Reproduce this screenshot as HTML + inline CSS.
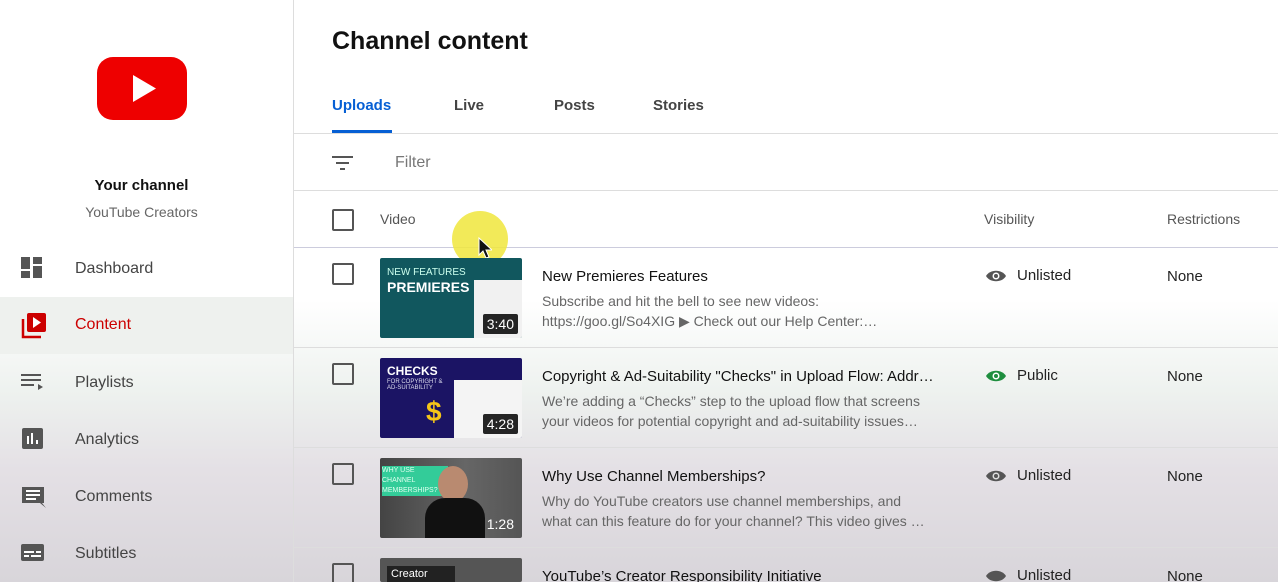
<!DOCTYPE html><html style="overflow:hidden;height:582px"><head><style>
body{margin:0;width:1278px;height:582px;overflow:hidden;font-family:"Liberation Sans",sans-serif;background:linear-gradient(#fff 0,#fff 300px,#eef2ef 390px,#e4e0e5 470px,#d8d5da 582px);position:relative;color:#0d0d0d}
.a{position:absolute}
.side{left:0;top:0;width:293px;height:582px;border-right:1px solid #ddd}
.nav{left:0;width:293px;height:57px}
.nav span{position:absolute;left:75px;top:19px;font-size:16px;color:#444}
.nav svg{position:absolute;left:21px;top:16px}
.hl{border-bottom:1px solid #ddd}
.cb{width:18px;height:18px;border:2px solid #555;border-radius:2px;position:absolute;left:332px}
.th{position:absolute;width:142px;height:80px;border-radius:2px;overflow:hidden}
.dur{position:absolute;right:4px;bottom:4px;background:rgba(0,0,0,.85);color:#fff;font-size:14px;padding:2px 4px;border-radius:2px}
.t{position:absolute;left:542px;font-size:15px;color:#111}
.d{position:absolute;left:542px;font-size:14px;color:#666;line-height:20px;width:392px}
.vis{position:absolute;left:985px;font-size:15px;color:#222}
.vis svg{vertical-align:-4px;margin-right:10px}
.rs{position:absolute;left:1167px;font-size:15px;color:#222}
</style></head><body>
<div class="a side"></div>
<svg class="a" style="left:97px;top:57px" width="90" height="63" viewBox="0 0 90 63"><rect width="90" height="63" rx="16" fill="#e00"/><path d="M36 18v27l23-13.5z" fill="#fff"/></svg>
<div class="a" style="left:0;width:283px;top:177px;text-align:center;font-size:15px;font-weight:bold;color:#111">Your channel</div>
<div class="a" style="left:0;width:283px;top:204px;text-align:center;font-size:14px;color:#666">YouTube Creators</div>
<div class="a nav" style="top:241px"><svg width="22" height="22"><rect x="0" y="0" width="9" height="12" fill="#555"/><rect x="12" y="0" width="9" height="7" fill="#555"/><rect x="0" y="14" width="9" height="7" fill="#555"/><rect x="12" y="9" width="9" height="12" fill="#555"/></svg><span>Dashboard</span></div>
<div class="a nav" style="top:297px;background:#eef1ee"><svg width="26" height="26"><path d="M2 6v18h18" stroke="#c00" stroke-width="2.5" fill="none"/><rect x="6" y="0" width="19" height="19" rx="2" fill="#c00"/><path d="M12 4v11l8-5.5z" fill="#fff"/></svg><span style="color:#c00">Content</span></div>
<div class="a nav" style="top:355px"><svg width="24" height="22"><path d="M0 4h20M0 9h20M0 14h13" stroke="#555" stroke-width="2"/><path d="M17 13v6l5-3z" fill="#555"/></svg><span>Playlists</span></div>
<div class="a nav" style="top:412px"><svg width="22" height="22"><rect x="1" y="0" width="21" height="21" rx="2" fill="#555"/><path d="M7 8v8M11 5v11M16 12v4" stroke="#fff" stroke-width="2"/></svg><span>Analytics</span></div>
<div class="a nav" style="top:469px"><svg width="26" height="26"><path d="M1 2h22v16H21l4 5-6-5H1z" fill="#555"/><path d="M5 6h14M5 10h14M5 14h10" stroke="#fff" stroke-width="2"/></svg><span>Comments</span></div>
<div class="a nav" style="top:526px"><svg width="24" height="22"><rect x="0" y="2" width="23" height="17" rx="2" fill="#555"/><path d="M3 10h10M15 10h5M3 14h5M10 14h10" stroke="#fff" stroke-width="2"/></svg><span>Subtitles</span></div>

<div class="a" style="left:332px;top:27px;font-size:25px;font-weight:bold;color:#111">Channel content</div>
<div class="a" style="left:332px;top:97px;font-size:15px;font-weight:bold;color:#065fd4">Uploads</div>
<div class="a" style="left:454px;top:97px;font-size:15px;font-weight:bold;color:#444">Live</div>
<div class="a" style="left:554px;top:97px;font-size:15px;font-weight:bold;color:#444">Posts</div>
<div class="a" style="left:653px;top:97px;font-size:15px;font-weight:bold;color:#444">Stories</div>
<div class="a" style="left:332px;top:130px;width:60px;height:3px;background:#065fd4"></div>
<div class="a hl" style="left:294px;top:133px;width:984px"></div>
<svg class="a" style="left:332px;top:155px" width="22" height="16"><path d="M0 2h21M4 8h13M8 14h5" stroke="#555" stroke-width="2"/></svg>
<div class="a" style="left:395px;top:154px;font-size:16px;color:#777">Filter</div>
<div class="a hl" style="left:294px;top:190px;width:984px"></div>
<div class="cb" style="top:209px"></div>
<div class="a" style="left:380px;top:211px;font-size:14px;color:#555">Video</div>
<div class="a" style="left:984px;top:211px;font-size:14px;color:#555">Visibility</div>
<div class="a" style="left:1167px;top:211px;font-size:14px;color:#555">Restrictions</div>
<div class="a hl" style="left:294px;top:247px;width:984px;border-color:#ccd"></div>
<div class="a" style="left:452px;top:211px;width:56px;height:56px;border-radius:50%;background:rgba(240,230,60,.85)"></div>
<svg class="a" style="left:478px;top:237px" width="14" height="22"><path d="M1 1v17l4-4 3 7 3-1-3-7h6z" fill="#111" stroke="#fff"/></svg>

<div class="cb" style="top:263px"></div>
<div class="th" style="left:380px;top:258px;background:#11575e"><div style="position:absolute;left:7px;top:9px;color:#cfe;font-size:10px">NEW FEATURES</div><div style="position:absolute;left:7px;top:21px;color:#fff;font-size:14px;font-weight:bold">PREMIERES</div><div style="position:absolute;right:0;top:22px;width:48px;height:58px;background:#f1f1f1"></div><div class="dur">3:40</div></div>
<div class="t" style="top:268px">New Premieres Features</div>
<div class="d" style="top:291px">Subscribe and hit the bell to see new videos:<br>https://goo.gl/So4XIG ▶ Check out our Help Center:…</div>
<div class="vis" style="top:267px"><svg width="22" height="16"><path d="M1 8C5 1 17 1 21 8 17 15 5 15 1 8z" fill="#555"/><circle cx="11" cy="8" r="3.5" fill="#fff"/><circle cx="11" cy="8" r="2" fill="#555"/></svg>Unlisted</div>
<div class="rs" style="top:268px">None</div>
<div class="a hl" style="left:294px;top:347px;width:984px"></div>

<div class="cb" style="top:363px"></div>
<div class="th" style="left:380px;top:358px;background:#1b1464"><div style="position:absolute;left:7px;top:6px;color:#fff;font-size:12px;font-weight:bold">CHECKS</div><div style="position:absolute;left:7px;top:21px;color:#dde;font-size:6px">FOR COPYRIGHT &amp;<br>AD-SUITABILITY</div><div style="position:absolute;left:46px;top:38px;color:#f5c518;font-size:28px;font-weight:bold">$</div><div style="position:absolute;right:0;top:22px;width:68px;height:58px;background:#f4f4f4"></div><div class="dur">4:28</div></div>
<div class="t" style="top:368px">Copyright &amp; Ad-Suitability "Checks" in Upload Flow: Addr…</div>
<div class="d" style="top:391px">We’re adding a “Checks” step to the upload flow that screens your videos for potential copyright and ad-suitability issues…</div>
<div class="vis" style="top:367px"><svg width="22" height="16"><path d="M1 8C5 1 17 1 21 8 17 15 5 15 1 8z" fill="#1e8e3e"/><circle cx="11" cy="8" r="3.5" fill="#fff"/><circle cx="11" cy="8" r="2" fill="#1e8e3e"/></svg>Public</div>
<div class="rs" style="top:368px">None</div>
<div class="a hl" style="left:294px;top:447px;width:984px"></div>

<div class="cb" style="top:463px"></div>
<div class="th" style="left:380px;top:458px;background:linear-gradient(90deg,#444,#666 60%,#555)"><div style="position:absolute;left:2px;top:8px;width:66px;height:30px;background:#3c9;font-size:7px;color:#dfe;line-height:10px">WHY USE<br>CHANNEL<br>MEMBERSHIPS?</div><div style="position:absolute;left:58px;top:8px;width:30px;height:36px;border-radius:50%;background:#b98a70"></div><div style="position:absolute;left:45px;top:40px;width:60px;height:40px;border-radius:20px 20px 0 0;background:#111"></div><div class="dur" style="background:none">1:28</div></div>
<div class="t" style="top:468px">Why Use Channel Memberships?</div>
<div class="d" style="top:491px">Why do YouTube creators use channel memberships, and<br>what can this feature do for your channel? This video gives …</div>
<div class="vis" style="top:467px"><svg width="22" height="16"><path d="M1 8C5 1 17 1 21 8 17 15 5 15 1 8z" fill="#555"/><circle cx="11" cy="8" r="3.5" fill="#ddd"/><circle cx="11" cy="8" r="2" fill="#555"/></svg>Unlisted</div>
<div class="rs" style="top:468px">None</div>
<div class="a hl" style="left:294px;top:547px;width:984px"></div>

<div class="cb" style="top:563px"></div>
<div class="th" style="left:380px;top:558px;height:24px;background:#555"><div style="position:absolute;left:7px;top:8px;background:#222;color:#fff;font-size:11px;padding:2px 4px;width:60px">Creator</div></div>
<div class="t" style="top:568px">YouTube’s Creator Responsibility Initiative</div>
<div class="vis" style="top:567px"><svg width="22" height="16"><path d="M1 8C5 1 17 1 21 8 17 15 5 15 1 8z" fill="#555"/></svg>Unlisted</div>
<div class="rs" style="top:568px">None</div>
</body></html>
